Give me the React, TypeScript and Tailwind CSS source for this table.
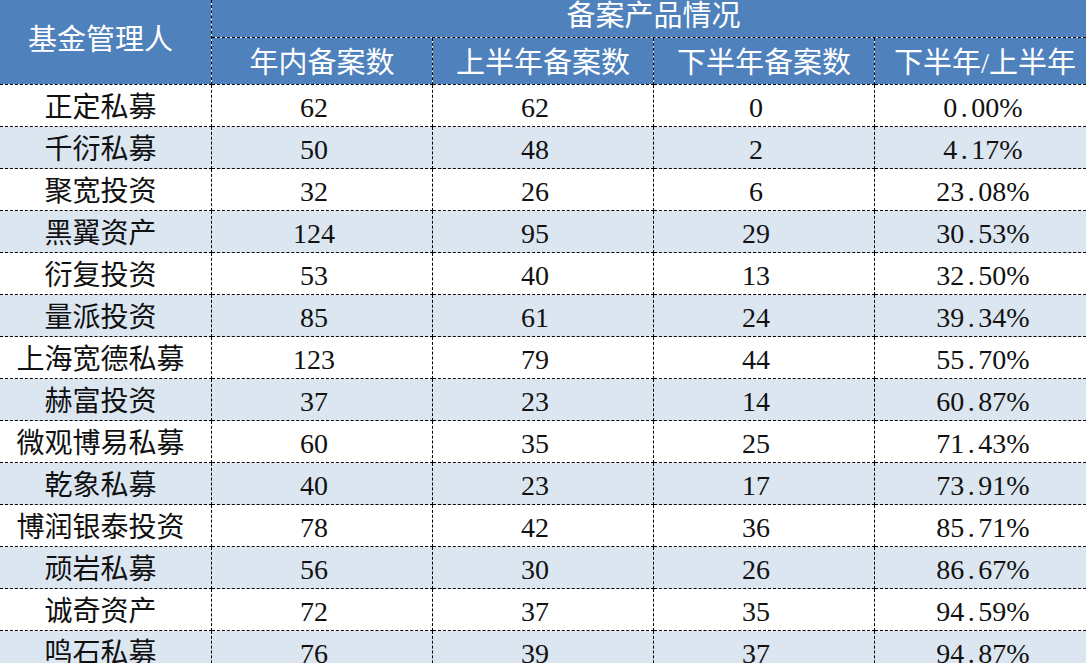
import React from 'react'

const ROWS = [
  ['正定私募', '62', '62', '0', '0.00%'],
  ['千衍私募', '50', '48', '2', '4.17%'],
  ['聚宽投资', '32', '26', '6', '23.08%'],
  ['黑翼资产', '124', '95', '29', '30.53%'],
  ['衍复投资', '53', '40', '13', '32.50%'],
  ['量派投资', '85', '61', '24', '39.34%'],
  ['上海宽德私募', '123', '79', '44', '55.70%'],
  ['赫富投资', '37', '23', '14', '60.87%'],
  ['微观博易私募', '60', '35', '25', '71.43%'],
  ['乾象私募', '40', '23', '17', '73.91%'],
  ['博润银泰投资', '78', '42', '36', '85.71%'],
  ['顽岩私募', '56', '30', '26', '86.67%'],
  ['诚奇资产', '72', '37', '35', '94.59%'],
  ['鸣石私募', '76', '39', '37', '94.87%'],
]

const SUB_HEADERS = ['年内备案数', '上半年备案数', '下半年备案数', '下半年/上半年']

const FONT = "font-['Liberation_Serif','Noto_Sans_CJK_SC',serif]"
const HEAD = 'bg-white border-r border-b border-dashed border-black shadow-[inset_0_0_0_300px_#4f81bd] text-white text-[29px] leading-none flex items-center justify-center'

// SimSun-style half-width decimal point
function Percent({ value }: { value: string }) {
  const [a, b] = value.split('.')
  return (
    <span>
      {a}
      <span className="inline-block w-[0.5em] text-center">.</span>
      {b}
    </span>
  )
}

export default function App() {
  return (
    <div className={`w-[1086px] h-[663px] overflow-hidden bg-white ${FONT}`}>
      <div className="grid w-[1096px] grid-cols-[212px_221px_221px_221px_221px] grid-rows-[38px_47px]">
        <div className={`${HEAD} row-span-2 pr-[10px] pb-[4px]`}>基金管理人</div>
        <div className={`${HEAD} col-span-4 pb-[4px]`}>备案产品情况</div>
        {SUB_HEADERS.map(h => (
          <div key={h} className={`${HEAD} pt-[4px]`}>{h}</div>
        ))}

        {ROWS.map((r, i) => {
          const bg = i % 2 === 1 ? 'bg-[#dce6f1]' : 'bg-white'
          const cell = `h-[42px] pt-[4px] border-r border-b border-dashed border-black flex items-center justify-center text-[28px] leading-none text-[#111] ${bg}`
          return (
            <React.Fragment key={r[0]}>
              <div className={`${cell} pr-[10px]`}>{r[0]}</div>
              <div className={`${cell} pr-[16px]`}>{r[1]}</div>
              <div className={`${cell} pr-[16px]`}>{r[2]}</div>
              <div className={`${cell} pr-[16px]`}>{r[3]}</div>
              <div className={`${cell} pr-[4px]`}><Percent value={r[4]} /></div>
            </React.Fragment>
          )
        })}
      </div>
    </div>
  )
}
